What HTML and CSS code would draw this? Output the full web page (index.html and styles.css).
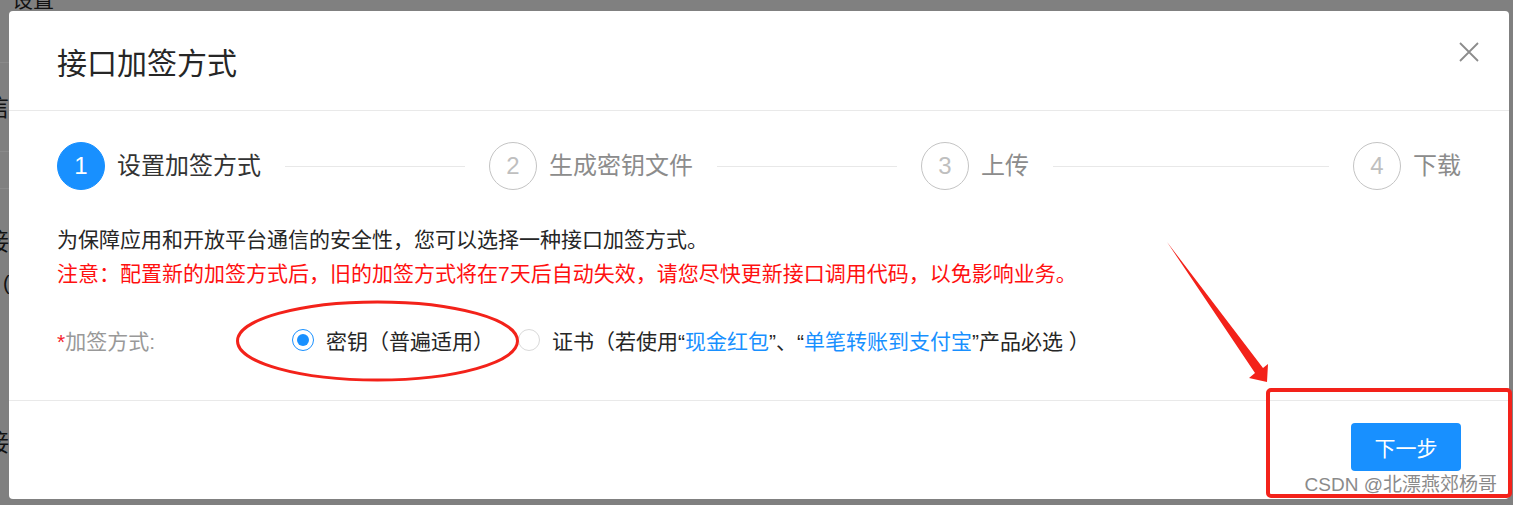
FILE: index.html
```html
<!DOCTYPE html>
<html lang="zh-CN">
<head>
<meta charset="utf-8">
<title>接口加签方式</title>
<link rel="stylesheet" href="styles.css">
</head>
<body>
<div class="page">
  <div class="bg-header">设置</div>
  <div class="bg-side">
    <div class="bg-line l1"></div>
    <div class="bg-frag f1">信</div>
    <div class="bg-line l2"></div>
    <div class="bg-line l3"></div>
    <div class="bg-frag f2">接</div>
    <div class="bg-frag f3">(</div>
    <div class="bg-frag f4">接</div>
  </div>
</div>

<div class="modal">
  <div class="modal-header">
    <div class="modal-title">接口加签方式</div>
    <button class="modal-close" aria-label="关闭">
      <svg width="24" height="24" viewBox="0 0 24 24"><path d="M3 3 L21 21 M21 3 L3 21" stroke="#8c8c8c" stroke-width="1.8" fill="none"/></svg>
    </button>
  </div>
  <div class="modal-body">
    <div class="steps">
      <div class="step active"><span class="step-icon">1</span><span class="step-title">设置加签方式</span><span class="step-tail"></span></div>
      <div class="step"><span class="step-icon">2</span><span class="step-title">生成密钥文件</span><span class="step-tail"></span></div>
      <div class="step"><span class="step-icon">3</span><span class="step-title">上传</span><span class="step-tail"></span></div>
      <div class="step last"><span class="step-icon">4</span><span class="step-title">下载</span></div>
    </div>
    <p class="desc">为保障应用和开放平台通信的安全性，您可以选择一种接口加签方式。</p>
    <p class="warn">注意：配置新的加签方式后，旧的加签方式将在7天后自动失效，请您尽快更新接口调用代码，以免影响业务。</p>
    <div class="form-row">
      <div class="form-label"><span class="req">*</span>加签方式:</div>
      <div class="radio-group">
        <label class="radio checked"><span class="radio-inner"></span><span class="radio-text">密钥（普遍适用）</span></label>
        <label class="radio"><span class="radio-inner"></span><span class="radio-text">证书（若使用“<span class="link">现金红包</span>”、“<span class="link">单笔转账到支付宝</span>”产品必选 ）</span></label>
      </div>
    </div>
  </div>
  <div class="modal-footer">
    <button class="btn-primary">下一步</button>
  </div>
</div>

<svg class="annot" width="1513" height="505" viewBox="0 0 1513 505">
  <ellipse cx="377.5" cy="341" rx="140" ry="39" fill="none" stroke="#f3221a" stroke-width="3"/>
  <path d="M1167 242 L1263 368 L1268 364 L1267 382 L1249 378 L1255 373 Z" fill="#f3221a"/>
  <rect x="1268" y="390" width="242" height="106" rx="3" fill="none" stroke="#f3221a" stroke-width="4"/>
</svg>

<div class="watermark">CSDN @北漂燕郊杨哥</div>
</body>
</html>
```

FILE: styles.css
```css
* { box-sizing: border-box; }

html, body {
  margin: 0;
  padding: 0;
  width: 1513px;
  height: 505px;
  overflow: hidden;
}

body {
  background: #808080;
  font-family: "Liberation Sans", "Noto Sans CJK SC", sans-serif;
  color: #333;
  position: relative;
}

/* dimmed page behind the dialog */
.page {
  width: 1513px;
  height: 505px;
}

.bg-header {
  margin-top: -12px;
  padding-left: 12px;
  height: 24px;
  line-height: 24px;
  font-size: 21px;
  color: #111;
}

.bg-side {
  display: flex;
  flex-direction: column;
}

.bg-line {
  height: 1px;
  width: 12px;
  background: #8a8a8a;
}
.bg-line.l1 { margin-top: 50px; }
.bg-line.l2 { margin-top: 31px; }
.bg-line.l3 { margin-top: 36px; }

.bg-frag {
  font-size: 24px;
  line-height: 24px;
  height: 24px;
  color: #111;
}
.bg-frag.f1 { margin-top: 33px; margin-left: -15px; }
.bg-frag.f2 { margin-top: 41px; margin-left: -15px; }
.bg-frag.f3 { margin-top: 17px; margin-left: 3px; font-size: 20px; }
.bg-frag.f4 { margin-top: 136px; margin-left: -15px; }

/* dialog */
.modal {
  position: absolute;
  left: 9px;
  top: 11px;
  width: 1500px;
  height: 488px;
  background: #fff;
  border-radius: 4px;
  display: flex;
  flex-direction: column;
}

.modal-header {
  height: 100px;
  padding: 38px 48px 0;
  border-bottom: 1px solid #e9e9e9;
  position: relative;
}

.modal-title {
  font-size: 30px;
  line-height: 30px;
  color: #262626;
}

.modal-close {
  position: absolute;
  top: 29px;
  right: 28px;
  width: 24px;
  height: 24px;
  padding: 0;
  border: 0;
  background: transparent;
  display: flex;
}

.modal-body {
  flex: 1;
  padding: 31px 48px 0;
  border-bottom: 1px solid #e9e9e9;
}

/* steps */
.steps {
  display: flex;
  height: 48px;
}

.step {
  flex: 1;
  display: flex;
  align-items: center;
  min-width: 0;
}
.step.last { flex: none; }

.step-icon {
  flex: none;
  width: 48px;
  height: 48px;
  border-radius: 50%;
  border: 1px solid #c4c4c4;
  color: #bfbfbf;
  font-size: 24px;
  display: flex;
  align-items: center;
  justify-content: center;
}

.step.active .step-icon {
  background: #1890ff;
  border-color: #1890ff;
  color: #fff;
}

.step-title {
  flex: none;
  margin-left: 12px;
  font-size: 24px;
  line-height: 48px;
  color: #8c8c8c;
}
.step.active .step-title { color: #333; }

.step-tail {
  flex: 1;
  height: 1px;
  margin: 0 24px;
  background: #e8e8e8;
}

/* description */
.desc, .warn {
  margin: 0;
  font-size: 21px;
  line-height: 34px;
}
.desc { margin-top: 33px; color: #262626; }
.warn { color: #ff1010; }

/* form row */
.form-row {
  margin-top: 25px;
  height: 48px;
  display: flex;
  align-items: center;
  font-size: 21px;
}

.form-label {
  width: 235px;
  color: #999;
}
.req { color: #f5222d; }

.radio-group {
  display: flex;
  align-items: center;
}

.radio {
  display: inline-flex;
  align-items: center;
  margin-right: 12px;
  color: #262626;
}

.radio-inner {
  width: 22px;
  height: 22px;
  border-radius: 50%;
  border: 1px solid #d9d9d9;
  display: flex;
  align-items: center;
  justify-content: center;
}

.radio.checked .radio-inner { border-color: #1890ff; }
.radio.checked .radio-inner::after {
  content: "";
  width: 12px;
  height: 12px;
  border-radius: 50%;
  background: #1890ff;
}

.radio-text { padding: 0 12px; }
.link { color: #1890ff; }

/* footer */
.modal-footer {
  height: 98px;
  padding: 22px 48px 0;
  display: flex;
  justify-content: flex-end;
  align-items: flex-start;
}

.btn-primary {
  width: 110px;
  height: 48px;
  border: 0;
  border-radius: 4px;
  background: #1890ff;
  color: #fff;
  font-family: "Liberation Sans", "Noto Sans CJK SC", sans-serif;
  font-size: 21px;
  padding: 0;
}

/* annotations */
.annot {
  position: absolute;
  left: 0;
  top: 0;
  pointer-events: none;
}

.watermark {
  position: absolute;
  right: 16px;
  bottom: 8px;
  font-size: 19px;
  line-height: 24px;
  color: #8a8a8a;
  text-shadow: 0 0 1px #fff, 0 0 1px #fff;
}
```
